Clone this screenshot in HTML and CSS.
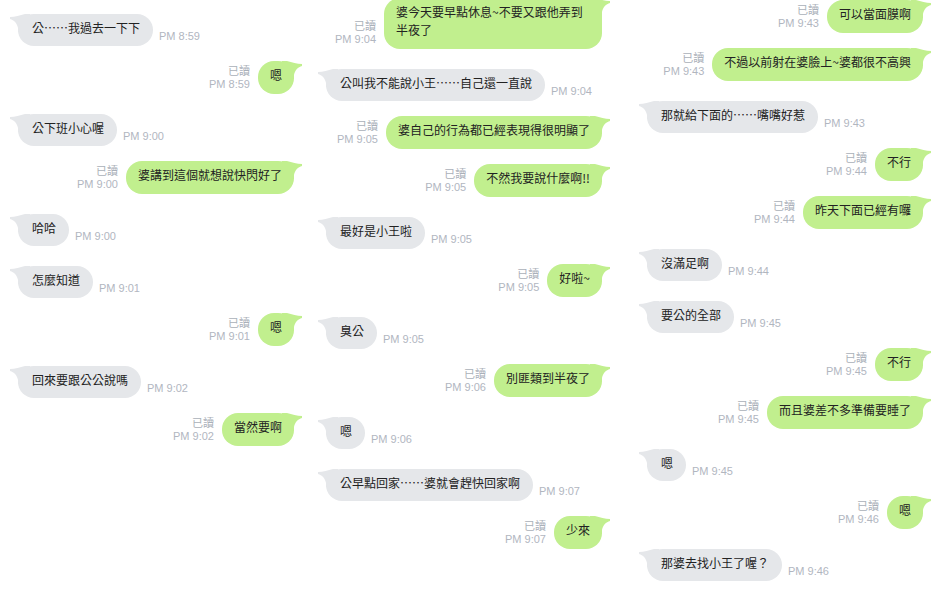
FILE: index.html
```html
<!DOCTYPE html>
<html lang="zh-Hant">
<head>
    <meta charset="UTF-8">
    <meta name="viewport" content="width=device-width, initial-scale=1.0">
    <title>聊天記錄</title>
    <link rel="stylesheet" href="styles.css">
</head>
<body>

<div class="chat">
    <!-- 第一欄 -->
    <div class="col col-1">
        <div class="msg"><div class="bubble">公……我過去一下下</div><span class="time">PM 8:59</span></div>
        <div class="msg sent"><div class="meta"><span class="read">已讀</span><span class="time">PM 8:59</span></div><div class="bubble">嗯</div></div>
        <div class="msg"><div class="bubble">公下班小心喔</div><span class="time">PM 9:00</span></div>
        <div class="msg sent"><div class="meta"><span class="read">已讀</span><span class="time">PM 9:00</span></div><div class="bubble">婆講到這個就想說快閃好了</div></div>
        <div class="msg"><div class="bubble">哈哈</div><span class="time">PM 9:00</span></div>
        <div class="msg"><div class="bubble">怎麼知道</div><span class="time">PM 9:01</span></div>
        <div class="msg sent"><div class="meta"><span class="read">已讀</span><span class="time">PM 9:01</span></div><div class="bubble">嗯</div></div>
        <div class="msg"><div class="bubble">回來要跟公公說嗎</div><span class="time">PM 9:02</span></div>
        <div class="msg sent"><div class="meta"><span class="read">已讀</span><span class="time">PM 9:02</span></div><div class="bubble">當然要啊</div></div>
    </div>

    <!-- 第二欄 -->
    <div class="col col-2">
        <div class="msg sent"><div class="meta"><span class="read">已讀</span><span class="time">PM 9:04</span></div><div class="bubble">婆今天要早點休息~不要又跟他弄到半夜了</div></div>
        <div class="msg"><div class="bubble">公叫我不能說小王……自己還一直說</div><span class="time">PM 9:04</span></div>
        <div class="msg sent"><div class="meta"><span class="read">已讀</span><span class="time">PM 9:05</span></div><div class="bubble">婆自己的行為都已經表現得很明顯了</div></div>
        <div class="msg sent"><div class="meta"><span class="read">已讀</span><span class="time">PM 9:05</span></div><div class="bubble">不然我要說什麼啊!!</div></div>
        <div class="msg"><div class="bubble">最好是小王啦</div><span class="time">PM 9:05</span></div>
        <div class="msg sent"><div class="meta"><span class="read">已讀</span><span class="time">PM 9:05</span></div><div class="bubble">好啦~</div></div>
        <div class="msg"><div class="bubble">臭公</div><span class="time">PM 9:05</span></div>
        <div class="msg sent"><div class="meta"><span class="read">已讀</span><span class="time">PM 9:06</span></div><div class="bubble">別匪類到半夜了</div></div>
        <div class="msg"><div class="bubble">嗯</div><span class="time">PM 9:06</span></div>
        <div class="msg"><div class="bubble">公早點回家……婆就會趕快回家啊</div><span class="time">PM 9:07</span></div>
        <div class="msg sent"><div class="meta"><span class="read">已讀</span><span class="time">PM 9:07</span></div><div class="bubble">少來</div></div>
    </div>

    <!-- 第三欄 -->
    <div class="col col-3">
        <div class="msg sent"><div class="meta"><span class="read">已讀</span><span class="time">PM 9:43</span></div><div class="bubble">可以當面膜啊</div></div>
        <div class="msg sent"><div class="meta"><span class="read">已讀</span><span class="time">PM 9:43</span></div><div class="bubble">不過以前射在婆臉上~婆都很不高興</div></div>
        <div class="msg"><div class="bubble">那就給下面的……嘴嘴好惹</div><span class="time">PM 9:43</span></div>
        <div class="msg sent"><div class="meta"><span class="read">已讀</span><span class="time">PM 9:44</span></div><div class="bubble">不行</div></div>
        <div class="msg sent"><div class="meta"><span class="read">已讀</span><span class="time">PM 9:44</span></div><div class="bubble">昨天下面已經有囉</div></div>
        <div class="msg"><div class="bubble">沒滿足啊</div><span class="time">PM 9:44</span></div>
        <div class="msg"><div class="bubble">要公的全部</div><span class="time">PM 9:45</span></div>
        <div class="msg sent"><div class="meta"><span class="read">已讀</span><span class="time">PM 9:45</span></div><div class="bubble">不行</div></div>
        <div class="msg sent"><div class="meta"><span class="read">已讀</span><span class="time">PM 9:45</span></div><div class="bubble">而且婆差不多準備要睡了</div></div>
        <div class="msg"><div class="bubble">嗯</div><span class="time">PM 9:45</span></div>
        <div class="msg sent"><div class="meta"><span class="read">已讀</span><span class="time">PM 9:46</span></div><div class="bubble">嗯</div></div>
        <div class="msg"><div class="bubble">那婆去找小王了喔？</div><span class="time">PM 9:46</span></div>
    </div>
</div>

</body>
</html>
```

FILE: styles.css
```css
body {
    margin: 0;
    background: #fff;
    color: #222;
    font-family: "Noto Sans CJK TC", sans-serif;
    overflow: hidden;
}

.chat {
    display: flex;
    align-items: flex-start;
    padding-left: 18px;
}

.col {
    width: 276px;
    display: flex;
    flex-direction: column;
}

.col-1 {
    margin-top: 14px;
}

.col-2 {
    margin-left: 32px;
    margin-top: -2px;
}

.col-3 {
    margin-left: 45px;
}

.msg {
    display: flex;
    align-items: flex-end;
    margin-top: 20px;
}

.msg.sent {
    justify-content: flex-end;
    margin-top: 15px;
}

.msg:first-child {
    margin-top: 0;
}

/* 對話泡泡 */
.bubble {
    position: relative;
    max-width: 196px;
    padding: 5px 13px 9px 14px;
    border-radius: 16px;
    background: #e5e7ea;
    font-size: 12px;
    line-height: 18px;
}

.bubble::before {
    content: "";
    position: absolute;
    top: 0;
    left: -8px;
    width: 20px;
    height: 18px;
    background: inherit;
    clip-path: path('M0 3 C5 3 10 1.5 15 0 L20 0 L20 18 L8 18 L8 14 C7 9 4 6 0 5 Z');
}

.sent .bubble {
    max-width: 194px;
    padding: 5px 12px 10px;
    background: #c1ef8e;
}

.sent .bubble::before {
    left: auto;
    right: -8px;
    transform: scaleX(-1);
}

.time {
    margin-left: 6px;
    padding-bottom: 3px;
    font-family: "Liberation Sans", sans-serif;
    font-size: 11px;
    line-height: 14px;
    color: #b1b6bf;
    white-space: nowrap;
}

.meta {
    display: flex;
    flex-direction: column;
    align-items: flex-end;
    margin-right: 8px;
    padding-bottom: 3px;
}

.meta .time {
    margin-left: 0;
    padding-bottom: 0;
}

.read {
    font-size: 11px;
    line-height: 14px;
    color: #aab0b9;
}
```
